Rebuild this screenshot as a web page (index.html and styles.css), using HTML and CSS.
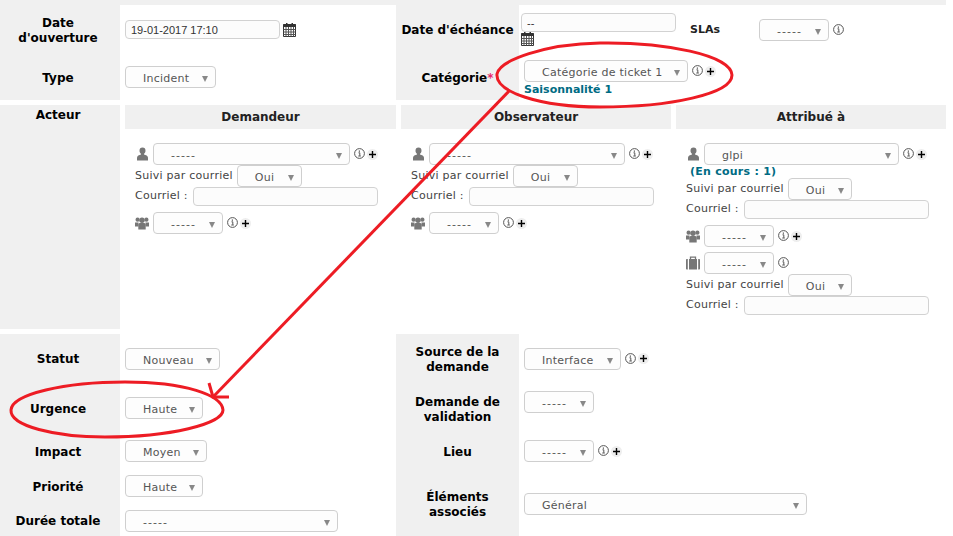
FILE: index.html
```html
<!DOCTYPE html>
<html lang="fr">
<head>
  <meta charset="UTF-8">
  <meta name="viewport" content="width=device-width, initial-scale=1.0">
  <title>Nouveau ticket</title>
  <link rel="stylesheet" href="styles.css">
</head>
<body>
  <!-- Icones reutilisees -->
  <svg class="defs" width="0" height="0" aria-hidden="true">
    <symbol id="i-user" viewBox="0 0 11 14">
      <path d="M5.500 0.500a3 3.300 0 0 1 3 3.300c0 1.300-.6 2.500-1.500 3v.7c1.800.6 4 1.300 4 3.200V13.500H0V10.700c0-1.900 2.200-2.600 4-3.200V6.800c-.9-.5-1.500-1.700-1.500-3a3 3.300 0 0 1 3-3.300z" fill="#777"/>
    </symbol>
    <symbol id="i-users" viewBox="0 0 14 14">
      <circle cx="2.600" cy="3.700" r="2.100" fill="#777"/>
      <circle cx="11.400" cy="3.700" r="2.100" fill="#777"/>
      <path d="M0 6.500h3.500v4H0zM10.500 6.500H14v4h-3.500z" fill="#777"/>
      <circle cx="7" cy="4.200" r="2.700" fill="#777"/>
      <path d="M3.300 8.500c0-1 1-1.500 2-1.500h3.400c1 0 2 .5 2 1.500v5H3.300z" fill="#777"/>
    </symbol>
    <symbol id="i-bag" viewBox="0 0 14 14">
      <path d="M4.500 3V1.200h5V3" fill="none" stroke="#777" stroke-width="1.300"/>
      <path d="M0 4c0-.6.400-1 1-1h.8v10.500H1c-.6 0-1-.4-1-1zM3 3h8v10.500H3zM12.200 3h.8c.6 0 1 .4 1 1v8.500c0 .6-.4 1-1 1h-.8z" fill="#777"/>
    </symbol>
    <symbol id="i-cal" viewBox="0 0 13 14">
      <path d="M3 0h1.500v2.500H3zM8.500 0H10v2.500H8.500z" fill="#333"/>
      <path d="M.5 1.500h12v12H.5z" fill="#fff" stroke="#333"/>
      <path d="M0 1.500h13v2.500H0z" fill="#333"/>
      <path d="M.5 6.500h12M.5 9h12M.5 11.500h12M3 4v9.500M5.500 4v9.500M8 4v9.500M10.500 4v9.500" stroke="#555" fill="none"/>
    </symbol>
    <symbol id="i-info" viewBox="0 0 11 11">
      <circle cx="5.500" cy="5.500" r="4.900" fill="#fff" stroke="#555"/>
      <path d="M4.500 4.800h1.300v3M4.300 8h2.500" fill="none" stroke="#555"/>
      <path d="M4.800 2.500h1.200v1.200H4.800z" fill="#555"/>
    </symbol>
    <symbol id="i-plus" viewBox="0 0 11 11">
      <circle cx="5.500" cy="5.500" r="5.500" fill="#eeeeee"/>
      <path d="M5.500 2v7M2 5.500h7" stroke="#000" stroke-width="1.400"/>
    </symbol>
  </svg>

  <div class="strip"></div>

  <!-- Dates, type, categorie -->
  <section class="head-grid">
    <div class="label label-left">Date d'ouverture</div>
    <div class="value">
      <input class="field w-155" type="text" value="19-01-2017 17:10" readonly>
      <svg class="ico-cal"><use href="#i-cal"/></svg>
    </div>
    <div class="label">Date d'échéance</div>
    <div class="value due">
      <input class="field w-155" type="text" value="--" readonly>
      <svg class="ico-cal"><use href="#i-cal"/></svg>
    </div>
    <div class="sla-label">SLAs</div>
    <div class="value">
      <div class="select w-70"><span class="none">-----</span></div>
      <svg class="ico-info"><use href="#i-info"/></svg>
    </div>

    <div class="label label-left">Type</div>
    <div class="value">
      <div class="select w-91"><span>Incident</span></div>
    </div>
    <div class="label">Catégorie<span class="req">*</span></div>
    <div class="value cat">
      <div class="inline">
        <div class="select w-164"><span>Catégorie de ticket 1</span></div>
        <svg class="ico-info"><use href="#i-info"/></svg>
        <svg class="ico-plus"><use href="#i-plus"/></svg>
      </div>
      <div class="note">Saisonnalité 1</div>
    </div>
  </section>

  <!-- Acteurs -->
  <section class="actors">
    <div class="label label-left label-top">Acteur</div>
    <div class="actor-head">Demandeur</div>
    <div class="actor-head">Observateur</div>
    <div class="actor-head">Attribué à</div>

    <div class="actor">
      <div class="inline">
        <svg class="ico-user"><use href="#i-user"/></svg>
        <div class="select w-197"><span class="none">-----</span></div>
        <svg class="ico-info"><use href="#i-info"/></svg>
        <svg class="ico-plus"><use href="#i-plus"/></svg>
      </div>
      <div class="inline mail"><span>Suivi par courriel</span><div class="select w-65"><span>Oui</span></div></div>
      <div class="inline mail"><span>Courriel :</span><input class="field w-185" type="text"></div>
      <div class="inline next">
        <svg class="ico-group"><use href="#i-users"/></svg>
        <div class="select w-70"><span class="none">-----</span></div>
        <svg class="ico-info"><use href="#i-info"/></svg>
        <svg class="ico-plus"><use href="#i-plus"/></svg>
      </div>
    </div>

    <div class="actor">
      <div class="inline">
        <svg class="ico-user"><use href="#i-user"/></svg>
        <div class="select w-196"><span class="none">-----</span></div>
        <svg class="ico-info"><use href="#i-info"/></svg>
        <svg class="ico-plus"><use href="#i-plus"/></svg>
      </div>
      <div class="inline mail"><span>Suivi par courriel</span><div class="select w-65"><span>Oui</span></div></div>
      <div class="inline mail"><span>Courriel :</span><input class="field w-185" type="text"></div>
      <div class="inline next">
        <svg class="ico-group"><use href="#i-users"/></svg>
        <div class="select w-70"><span class="none">-----</span></div>
        <svg class="ico-info"><use href="#i-info"/></svg>
        <svg class="ico-plus"><use href="#i-plus"/></svg>
      </div>
    </div>

    <div class="actor">
      <div class="inline">
        <svg class="ico-user"><use href="#i-user"/></svg>
        <div class="select w-195"><span>glpi</span></div>
        <svg class="ico-info"><use href="#i-info"/></svg>
        <svg class="ico-plus"><use href="#i-plus"/></svg>
      </div>
      <div class="note count">(En cours : 1)</div>
      <div class="inline mail"><span>Suivi par courriel</span><div class="select w-64"><span>Oui</span></div></div>
      <div class="inline mail"><span>Courriel :</span><input class="field w-185" type="text"></div>
      <div class="inline next">
        <svg class="ico-group"><use href="#i-users"/></svg>
        <div class="select w-70"><span class="none">-----</span></div>
        <svg class="ico-info"><use href="#i-info"/></svg>
        <svg class="ico-plus"><use href="#i-plus"/></svg>
      </div>
      <div class="inline next-bag">
        <svg class="ico-group"><use href="#i-bag"/></svg>
        <div class="select w-70"><span class="none">-----</span></div>
        <svg class="ico-info"><use href="#i-info"/></svg>
      </div>
      <div class="inline mail"><span>Suivi par courriel</span><div class="select w-64"><span>Oui</span></div></div>
      <div class="inline mail"><span>Courriel :</span><input class="field w-185" type="text"></div>
    </div>
  </section>

  <!-- Statut et priorite -->
  <section class="status-grid">
    <div class="label label-left">Statut</div>
    <div class="value"><div class="select w-95"><span>Nouveau</span></div></div>
    <div class="label">Source de la demande</div>
    <div class="value">
      <div class="select w-97"><span>Interface</span></div>
      <svg class="ico-info"><use href="#i-info"/></svg>
      <svg class="ico-plus"><use href="#i-plus"/></svg>
    </div>

    <div class="label label-left">Urgence</div>
    <div class="value"><div class="select w-78"><span>Haute</span></div></div>
    <div class="label label-low">Demande de validation</div>
    <div class="value val-top"><div class="select w-70"><span class="none">-----</span></div></div>

    <div class="label label-left">Impact</div>
    <div class="value"><div class="select w-82"><span>Moyen</span></div></div>
    <div class="label">Lieu</div>
    <div class="value">
      <div class="select w-70"><span class="none">-----</span></div>
      <svg class="ico-info"><use href="#i-info"/></svg>
      <svg class="ico-plus"><use href="#i-plus"/></svg>
    </div>

    <div class="label label-left">Priorité</div>
    <div class="value"><div class="select w-78"><span>Haute</span></div></div>
    <div class="label label-low span-2">Éléments associés</div>
    <div class="value span-2 general"><div class="select w-283"><span>Général</span></div></div>

    <div class="label label-left label-low">Durée totale</div>
    <div class="value last"><div class="select w-213"><span class="none">-----</span></div></div>
  </section>

  <!-- Annotations en rouge par dessus la capture -->
  <svg class="marks" viewBox="0 0 953 536" width="953" height="536" aria-hidden="true">
    <path d="M497 74C500 60 545 44 600 43C665 42 731 55 732 75C732 94 670 107 600 107C540 107 495 92 497 74Z"/>
    <path d="M510 90L213 397"/>
    <path d="M209 383L213 397L229 397"/>
    <path d="M11 410C12 394 65 382 125 382C185 382 222 395 223 410C223 424 170 437 105 437C55 437 10 426 11 410Z"/>
  </svg>
</body>
</html>
```

FILE: styles.css
```css
html, body {
  margin: 0;
  padding: 0;
}
body {
  position: relative;
  width: 953px;
  height: 536px;
  overflow: hidden;
  background-color: #ffffff;
  font-family: 'DejaVu Sans', Verdana, sans-serif;
  font-size: 11px;
  letter-spacing: 0.25px;
  color: #444444;
}
.defs {
  position: absolute;
}
.strip {
  width: 946px;
  height: 5px;
  background-color: #f0f0f0;
}
.head-grid {
  display: grid;
  width: 946px;
  grid-template-columns: 120px 276px 123px 164px 71px 1fr;
  grid-template-rows: 49px 46px;
}
.head-grid .cat {
  grid-column: 4 / 7;
}
.actors {
  display: grid;
  margin-top: 5px;
  width: 946px;
  grid-template-columns: 120px 271px 270px 270px;
  grid-template-rows: 24px 200px;
  column-gap: 5px;
}
.actors .label-top {
  grid-row: 1 / 3;
}
.status-grid {
  display: grid;
  margin-top: 5px;
  width: 946px;
  grid-template-columns: 120px 276px 123px 1fr;
  grid-template-rows: 49px 50px 36px 34px 33px;
}
.label {
  display: flex;
  align-items: center;
  justify-content: center;
  padding: 2px 3px 0;
  background-color: #f0f0f0;
  color: #000000;
  font-size: 12px;
  font-weight: bold;
  letter-spacing: 0;
  line-height: 15px;
  text-align: center;
}
.label-left {
  padding-left: 1px;
  padding-right: 5px;
}
.label-low {
  padding-top: 4px;
}
.label-top {
  align-items: flex-start;
  padding-top: 3px;
}
.req {
  color: #e8286e;
}
.value {
  display: flex;
  align-items: center;
  gap: 4px;
  padding-left: 5px;
}
.due {
  display: block;
  align-self: center;
  margin-left: -3px;
}
.due .ico-cal {
  display: block;
  margin: 0;
}
.cat {
  display: block;
  align-self: center;
  padding-top: 2px;
}
.val-top {
  align-items: flex-start;
  padding-top: 8px;
}
.span-2 {
  grid-row: span 2;
}
.general {
  padding-top: 2px;
}
.last {
  padding-top: 3px;
}
.sla-label {
  display: flex;
  align-items: center;
  padding-left: 7px;
  color: #222222;
  font-weight: bold;
  letter-spacing: 0;
}
.actor-head {
  display: flex;
  align-items: center;
  justify-content: center;
  background-color: #f0f0f0;
  color: #222222;
  font-size: 12px;
  font-weight: bold;
  letter-spacing: 0;
}
.actor {
  padding: 14px 0 0 10px;
}
.inline {
  display: flex;
  align-items: center;
  gap: 4px;
}
.mail {
  white-space: nowrap;
}
.mail > span {
  margin-top: -2px;
}
.mail > .field {
  margin-left: 1px;
}
.next {
  margin-top: 6px;
}
.next-bag {
  margin-top: 5px;
}
.note {
  margin-top: 1px;
  color: #006b83;
  font-weight: bold;
  letter-spacing: 0;
  line-height: 13px;
}
.count {
  margin: 0 0 0 4px;
  letter-spacing: 0.25px;
}
.select {
  position: relative;
  flex: none;
  box-sizing: border-box;
  height: 22px;
  padding-left: 17px;
  border: 1px solid #cfcfcf;
  border-radius: 4px;
  background-color: #fdfdfd;
  color: #555555;
  line-height: 23px;
  white-space: nowrap;
}
.select::after {
  content: "";
  position: absolute;
  top: 9px;
  right: 7px;
  border-top: 6px solid #888888;
  border-left: 3px solid transparent;
  border-right: 3px solid transparent;
}
.none {
  letter-spacing: 1px;
}
.field {
  flex: none;
  box-sizing: border-box;
  height: 19px;
  margin: 0;
  padding: 0 5px;
  border: 1px solid #d2d2d2;
  border-radius: 4px;
  background-color: #fcfcfc;
  color: #333333;
  font-family: 'Liberation Sans', Arial, sans-serif;
  font-size: 11px;
  letter-spacing: 0;
  outline: none;
}
.w-64 { width: 64px; }
.w-65 { width: 65px; }
.w-70 { width: 70px; }
.w-78 { width: 78px; }
.w-82 { width: 82px; }
.w-91 { width: 91px; }
.w-95 { width: 95px; }
.w-97 { width: 97px; }
.w-155 { width: 155px; }
.w-164 { width: 164px; }
.w-185 { width: 185px; }
.w-195 { width: 195px; }
.w-196 { width: 196px; }
.w-197 { width: 197px; }
.w-213 { width: 213px; }
.w-283 { width: 283px; }
.ico-cal {
  flex: none;
  width: 13px;
  height: 14px;
  margin-left: -1px;
}
.ico-info {
  flex: none;
  width: 11px;
  height: 11px;
  margin-top: -1px;
}
.ico-plus {
  flex: none;
  width: 11px;
  height: 11px;
  margin-left: -2px;
}
.ico-user {
  flex: none;
  width: 11px;
  height: 14px;
  margin: 0 1px 0 2px;
}
.ico-group {
  flex: none;
  width: 14px;
  height: 14px;
}
.marks {
  position: absolute;
  top: 0;
  left: 0;
  pointer-events: none;
}
.marks path {
  fill: none;
  stroke: #ed1c24;
  stroke-width: 3;
}
```
